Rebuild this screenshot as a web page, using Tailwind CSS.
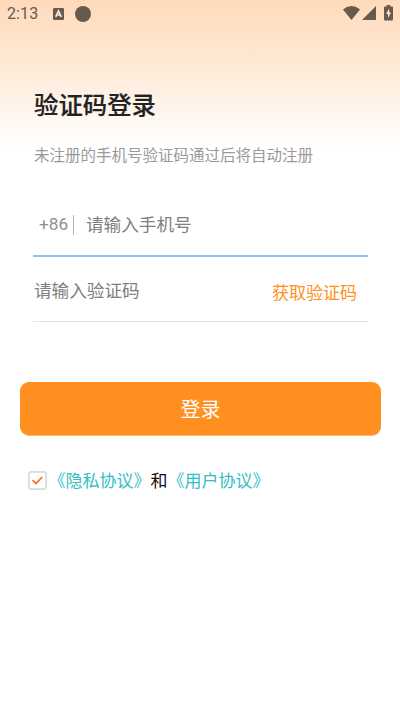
<!DOCTYPE html>
<html lang="zh-CN">
<head>
<meta charset="UTF-8">
<meta name="viewport" content="width=device-width, initial-scale=1">
<title>验证码登录</title>
<script src="https://cdn.jsdelivr.net/npm/@tailwindcss/browser@4"></script>
</head>
<body class="bg-white">
<div class="flex h-[711px] w-[400px] flex-col overflow-hidden bg-linear-to-b from-[#ffdaba] from-0% via-[#ffe9d6] via-[65px] to-white to-[148px] font-['Noto_Sans_CJK_SC',sans-serif]">
  <header class="flex h-7 shrink-0 items-center pl-[7px] pr-[7px] text-[#685a4d]">
    <span class="w-[46px] font-[Roboto,sans-serif] text-[16px] leading-7 tracking-[0.1px]">2:13</span>
    <svg class="h-[12px] w-[11px]" viewBox="0 0 11 12"><rect width="11" height="12" rx="1.3" fill="currentColor"/><path d="M2.700 8.800 5.500 3 8.300 8.800M3.800 7H7.200" fill="none" stroke="#ffe6d0" stroke-width="1.700"/></svg>
    <span class="ml-[11px] size-[16px] rounded-full bg-current"></span>
    <div class="ml-auto flex items-center pb-[2px]">
      <svg class="h-[14px] w-[17px]" viewBox="0 0 17 14"><path d="M0 3.500Q8.500-3.300 17 3.500L8.500 14Z" fill="currentColor"/></svg>
      <svg class="ml-[2px] h-[14px] w-[14px]" viewBox="0 0 14 14"><path d="M14 0V14H0Z" fill="currentColor"/></svg>
      <svg class="ml-[8px] h-[16px] w-[9px]" viewBox="0 0 9 16"><path d="M2.700 0H6.300V1.500H8Q9 1.500 9 2.500V14.500Q9 15.500 8 15.500H1Q0 15.500 0 14.500V2.500Q0 1.500 1 1.500H2.700Z" fill="currentColor"/><path d="M5.200 3.500 2 9H4V13L7 7.500H5.200Z" fill="#ffe6d0"/></svg>
    </div>
  </header>
  <main class="flex flex-col">
    <h1 class="mt-[58px] pl-[34px] text-[24.4px] font-medium leading-9 text-[#222] [-webkit-text-stroke:0.2px_#222]">验证码登录</h1>
    <p class="mt-[20px] pl-[34px] text-[15.5px] font-normal leading-6 text-[#9c9a99]">未注册的手机号验证码通过后将自动注册</p>
    <div class="ml-[33px] mr-[32px] mt-[34px] flex h-[57px] border-b-2 border-[#8fbcfb] text-[17.600px] text-[#808080]">
      <span class="w-[40px] pl-[6px] pt-[12px] font-[Roboto,sans-serif] text-[17.200px] leading-6 text-[#909090]">+86</span>
      <span class="mt-[15px] h-[20px] w-px bg-[#b5b5b5]"></span>
      <span class="ml-[12px] mt-[12px] leading-6">请输入手机号</span>
    </div>
    <div class="ml-[33px] mr-[32px] flex h-[65px] items-start justify-between border-b border-[#e2e2e2] pl-px pr-[11px] pt-[21px]">
      <span class="text-[17.600px] leading-6 text-[#808080]">请输入验证码</span>
      <button class="mt-[2px] text-[17px] leading-6 text-[#ff9020]">获取验证码</button>
    </div>
    <button class="ml-[20px] mt-[60px] h-[53px] w-[361px] rounded-[9px] bg-[#ff9020] text-[20px] leading-[52px] text-white shadow-[0_1px_0_#f9b67a]">登录</button>
    <div class="mt-[32px] flex items-center pl-[28px] text-[17px] leading-[26px] text-[#111]">
      <svg class="mr-[1.500px] size-[19px]" viewBox="0 0 19 19"><rect x=".9" y=".9" width="17.200" height="17.200" rx="2.500" fill="white" stroke="#dadada" stroke-width="1.700"/><path d="M4.500 9.200 8 12.500 14.200 6.200" fill="none" stroke="#fa7138" stroke-width="1.800"/></svg>
      <a class="text-[#34bdc6]">《隐私协议》</a><span>和</span><a class="text-[#34bdc6]">《用户协议》</a>
    </div>
  </main>
</div>
</body>
</html>
